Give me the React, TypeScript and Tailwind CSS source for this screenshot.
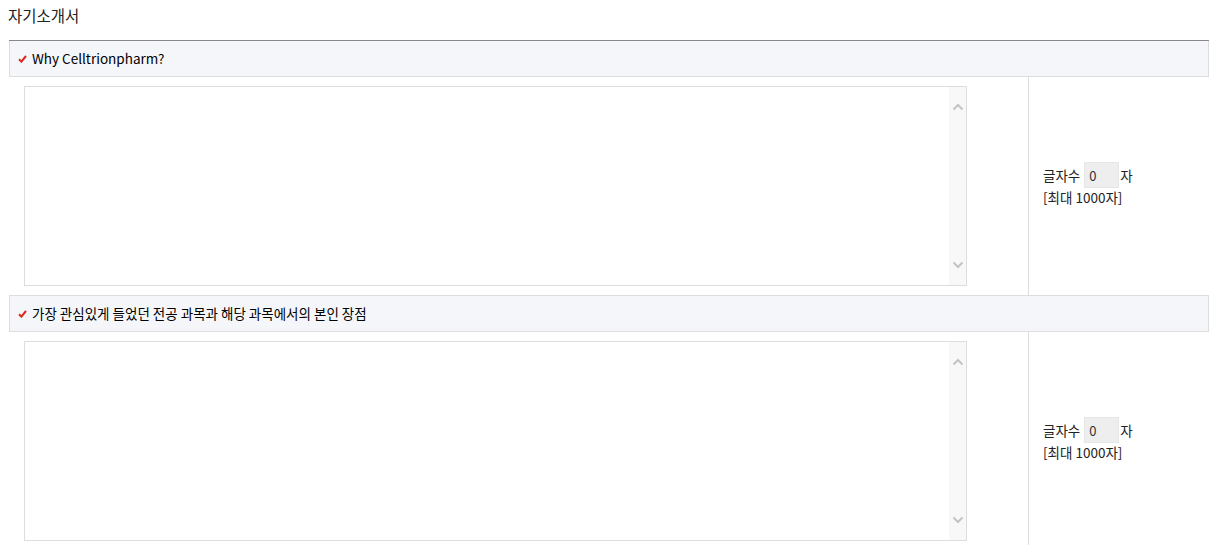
const font = { fontFamily: '"Noto Sans CJK KR", "Noto Sans", sans-serif' };

function Check() {
  return (
    <svg width="9" height="8" viewBox="0 0 9 8" className="shrink-0">
      <path d="M1 4.2 L3.4 6.6 L8 1" fill="none" stroke="#e0251b" strokeWidth="2" />
    </svg>
  );
}

function FakeTextarea() {
  return (
    <div className="flex h-[200px] w-[943px] border border-[#dddddd] bg-white">
      <textarea className="flex-1 resize-none outline-none" />
      <div className="flex w-[17px] flex-col items-center justify-between bg-[#f8f8f8] py-[16px]">
        <svg width="12" height="8" viewBox="0 0 12 8">
          <path d="M1.5 6.5 L6 2 L10.5 6.5" fill="none" stroke="#c4c4c4" strokeWidth="2" />
        </svg>
        <svg width="12" height="8" viewBox="0 0 12 8">
          <path d="M1.5 1.5 L6 6 L10.5 1.5" fill="none" stroke="#c4c4c4" strokeWidth="2" />
        </svg>
      </div>
    </div>
  );
}

function Question({ title }: { title: string }) {
  return (
    <>
      <div className="flex h-[36px] items-center gap-[5px] border-x border-b border-[#dddddd] bg-[#f5f6fa] pl-[8px] text-[13.5px] text-black">
        <Check />
        <span>{title}</span>
      </div>
      <div className="flex">
        <div className="flex w-[1019px] px-[15px] py-[9px]">
          <FakeTextarea />
        </div>
        <div className="flex flex-1 flex-col justify-center border-l border-[#dddddd] pb-[4px] pl-[14px] text-[13.5px] leading-[18px] text-[#222]">
          <div className="flex items-center">
            <span>글자수</span>
            <span className="ml-[4px] mr-[1px] flex h-[26px] w-[35px] items-end border border-[#e6e6e6] bg-[#eeeeee] pb-[2px] pl-[4px] text-[13px] text-[#333]">
              0
            </span>
            <span>자</span>
          </div>
          <div>[최대 1000자]</div>
        </div>
      </div>
    </>
  );
}

export default function App() {
  return (
    <div className="min-h-[545px] bg-white" style={font}>
      <h2 className="px-[8px] pt-[4px] text-[15.5px] leading-[22px] font-normal text-[#222]">자기소개서</h2>
      <div className="ml-[9px] mt-[14px] w-[1200px]">
        <div className="h-px bg-[#888888]" />
        <Question title="Why Celltrionpharm?" />
        <div className="border-t border-[#dddddd]" />
        <Question title="가장 관심있게 들었던 전공 과목과 해당 과목에서의 본인 장점" />
      </div>
    </div>
  );
}
